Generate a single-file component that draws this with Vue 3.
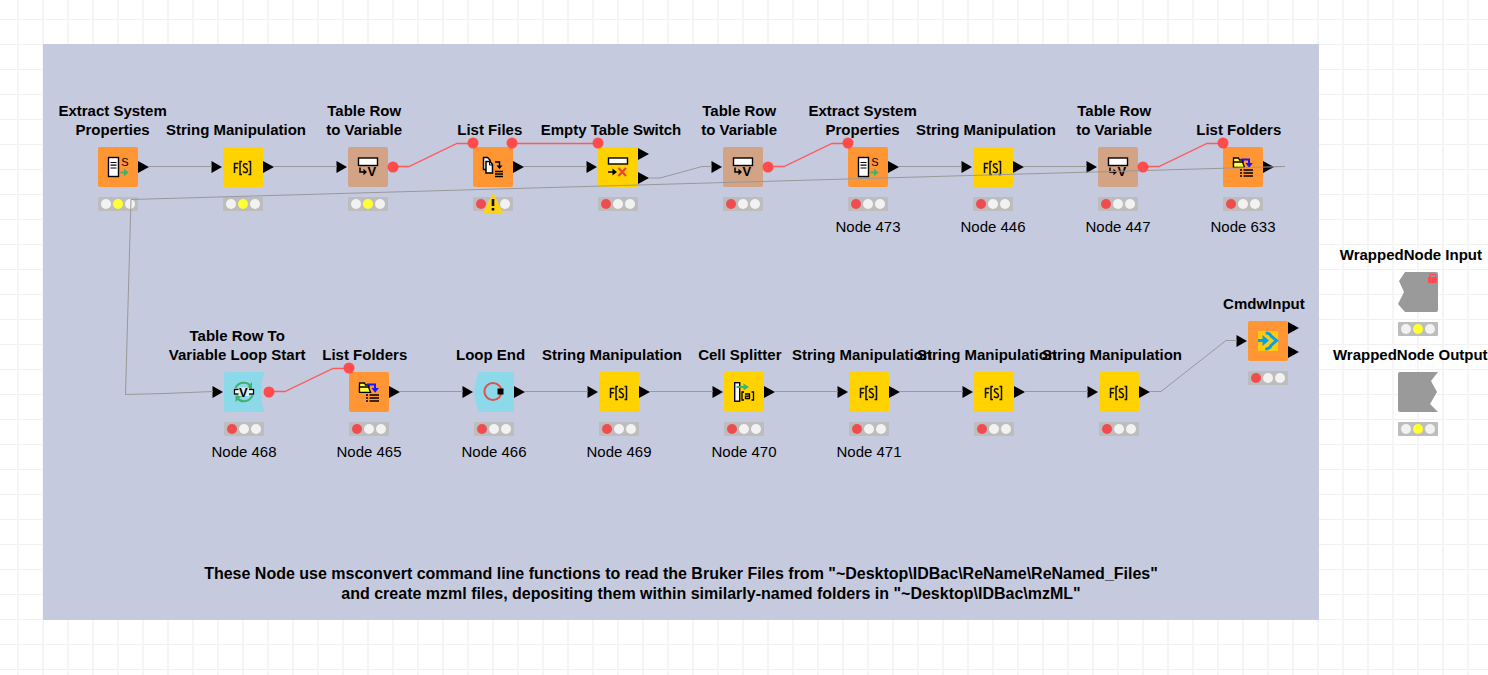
<script setup>
const nodes = [
  { id: 1, x: 98, y: 147, kind: 'extract', title: ['Extract System', 'Properties'], light: 'yellow', out: [20] },
  { id: 2, x: 223, y: 147, kind: 'string', title: ['String Manipulation'], light: 'yellow', in: true, out: [20] },
  { id: 3, x: 348, y: 147, kind: 'row', title: ['Table Row', 'to Variable'], light: 'yellow', in: true, dots: [[45, 20]] },
  { id: 4, x: 473, y: 147, kind: 'files', title: ['List Files'], light: 'red', warn: true, out: [20], dots: [[0, -4], [39, -4]] },
  { id: 5, x: 598, y: 147, kind: 'switch', title: ['Empty Table Switch'], light: 'red', in: true, out: [7, 31], dots: [[0, -4]] },
  { id: 6, x: 723, y: 147, kind: 'row', title: ['Table Row', 'to Variable'], light: 'red', in: true, dots: [[45, 20]] },
  { id: 7, x: 848, y: 147, kind: 'extract', title: ['Extract System', 'Properties'], light: 'red', label: 'Node 473', out: [20], dots: [[0, -4]] },
  { id: 8, x: 973, y: 147, kind: 'string', title: ['String Manipulation'], light: 'red', label: 'Node 446', in: true, out: [20] },
  { id: 9, x: 1098, y: 147, kind: 'row', title: ['Table Row', 'to Variable'], light: 'red', label: 'Node 447', in: true, dots: [[45, 20]] },
  { id: 10, x: 1223, y: 147, kind: 'folders', title: ['List Folders'], light: 'red', label: 'Node 633', out: [20], dots: [[0, -4]] },
  { id: 11, x: 224, y: 372, kind: 'loopstart', title: ['Table Row To', 'Variable Loop Start'], light: 'red', label: 'Node 468', in: true, dots: [[45, 20]] },
  { id: 12, x: 349, y: 372, kind: 'folders', title: ['List Folders'], light: 'red', label: 'Node 465', out: [20], dots: [[0, -4]] },
  { id: 13, x: 474, y: 372, kind: 'loopend', title: ['Loop End'], light: 'red', label: 'Node 466', in: true, out: [20] },
  { id: 14, x: 599, y: 372, kind: 'string', title: ['String Manipulation'], light: 'red', label: 'Node 469', in: true, out: [20] },
  { id: 15, x: 724, y: 372, kind: 'splitter', title: ['Cell Splitter'], light: 'red', label: 'Node 470', in: true, out: [20] },
  { id: 16, x: 849, y: 372, kind: 'string', title: ['String Manipulation'], light: 'red', label: 'Node 471', in: true, out: [20] },
  { id: 17, x: 974, y: 372, kind: 'string', title: ['String Manipulation'], light: 'red', in: true, out: [20] },
  { id: 18, x: 1099, y: 372, kind: 'string', title: ['String Manipulation'], light: 'red', in: true, out: [20] },
  { id: 19, x: 1248, y: 321, kind: 'meta', title: ['CmdwInput'], light: 'red', in: true, out: [7, 31] },
  { id: 20, x: 1398, y: 272, kind: 'input', title: ['WrappedNode Input'], light: 'yellow' },
  { id: 21, x: 1398, y: 372, kind: 'output', title: ['WrappedNode Output'], light: 'yellow' },
]

const fills = {
  extract: '#ff9633', files: '#ff9633', folders: '#ff9633', meta: '#ff9633',
  string: '#ffd200', switch: '#ffd200', splitter: '#ffd200',
  row: '#d2a384', loopstart: '#8cd9e9', loopend: '#8cd9e9',
  input: '#9a9a9a', output: '#9a9a9a',
}
const shapes = {
  loopstart: 'M2 0H40Q34 20 40 40H2Q0 40 0 38V2Q0 0 2 0Z',
  loopend: 'M5 0H38Q40 0 40 2V38Q40 40 38 40H5Q3 38 0 20Q3 2 5 0Z',
  input: 'M7 0H38Q40 0 40 2V38Q40 40 38 40H7L0 32L6 20L1 9Z',
  output: 'M2 0H40L33 9L39 20L32 32L40 40H2Q0 40 0 38V2Q0 0 2 0Z',
}
const square = 'M2 0H38Q40 0 40 2V38Q40 40 38 40H2Q0 40 0 38V2Q0 0 2 0Z'

const dataWires = [
  'M149 166.5H212', 'M274 166.5H337', 'M524 166.5H587', 'M899 166.5H962', 'M1024 166.5H1087',
  'M649 178H660L702 166.5H712',
  'M1274 166.5H1285L131 199.5L125.500 394.500L165 393.500L213 391.500',
  'M400 391.5H463', 'M525 391.5H588', 'M650 391.5H713', 'M775 391.5H838', 'M900 391.5H963', 'M1025 391.5H1088',
  'M1150 391.5H1161L1226 340.5H1237',
]
const variableWires = [
  'M393 166.5H409L457 143.5H473', 'M512 143.5H598',
  'M768 166.5H784L832 143.5H848', 'M1143 166.5H1159L1207 143.5H1223',
  'M269 391.5H285L333 368.5H349',
]
</script>

<template>
  <main class="canvas">
    <section class="annotation">
      <p>These Node use msconvert command line functions to read the Bruker Files from "~Desktop\IDBac\ReName\ReNamed_Files"</p>
      <p class="indented">and create mzml files, depositing them within similarly-named folders in "~Desktop\IDBac\mzML"</p>
    </section>

    <article v-for="n in nodes" :key="n.id" class="node" :style="{ left: n.x + 'px', top: n.y + 'px' }">
      <h2 class="title"><span v-for="line in n.title" :key="line">{{ line }}</span></h2>
      <svg class="body" width="40" height="40" viewBox="0 0 40 40">
        <path :d="shapes[n.kind] || square" :fill="fills[n.kind]" />

        <g v-if="n.kind === 'extract'">
          <rect x="10.500" y="10.500" width="10" height="19" fill="#fff" stroke="#000" stroke-width="1.400" />
          <path d="M12.500 15.500H18.500M12.500 18.200H18.500M12.500 21H18.500" stroke="#000" stroke-width="1.200" />
          <text x="23.300" y="19" font-size="11">S</text>
          <path d="M22.500 25.500H28" stroke="#3cb371" stroke-width="2" />
          <path d="M26 21.500L30.500 25.500L26 29.500Z" fill="#3cb371" />
        </g>
        <g v-else-if="n.kind === 'string'">
          <path d="M11.500 26V16M11 16.500H15.500M11 20.800H14.800" fill="none" stroke="#111" stroke-width="1.500" />
          <path d="M19 14.500H17V27.500H19M25.500 14.500H27.500V27.500H25.500" fill="none" stroke="#111" stroke-width="1.500" />
          <path d="M24.500 17.500Q22.500 16 20.800 17.200Q19.500 19.500 22.500 20.800Q25.500 22.500 24 24.800Q22 26.300 19.800 24.500" fill="none" stroke="#111" stroke-width="1.500" />
        </g>
        <g v-else-if="n.kind === 'row'">
          <rect x="10.500" y="11" width="19" height="7.500" fill="#fff" stroke="#000" stroke-width="1.400" />
          <path d="M12 20.500V25H18" fill="none" stroke="#000" stroke-width="1.500" />
          <path d="M15.500 21.800L19 25L15.500 28.200Z" />
          <text x="19.400" y="29.300" font-size="13" font-weight="700">V</text>
        </g>
        <g v-else-if="n.kind === 'files'">
          <path d="M10.500 10.500H14.500L17 13V22.500H10.500Z" fill="#fff" stroke="#000" stroke-width="1.500" />
          <path d="M13 14.500H17L19.500 17.500V26H13Z" fill="#fff" stroke="#000" stroke-width="1.500" />
          <path d="M16.500 14.500V18H19.500" fill="none" stroke="#000" />
          <path d="M22 15H26.500V20" fill="none" stroke="#000" stroke-width="1.500" />
          <path d="M23.500 18.500H29.500L26.500 22Z" />
          <path d="M22 24.500H30M22 27H30M22 29.500H30" stroke="#000" stroke-width="1.400" />
        </g>
        <g v-else-if="n.kind === 'switch'">
          <rect x="10.500" y="11" width="19" height="6" fill="#fff" stroke="#000" stroke-width="1.400" />
          <path d="M10 25H16" stroke="#000" stroke-width="1.500" />
          <path d="M14.500 21.500L19 25L14.500 28.500Z" />
          <path d="M20.500 21L28 29M28 21L20.500 29" stroke="#ee4444" stroke-width="2.300" />
        </g>
        <g v-else-if="n.kind === 'folders'">
          <path d="M10.500 20V11H15.500L16.500 13H20V15.500" fill="#ffff44" stroke="#000" stroke-width="1.300" />
          <path d="M10.500 20.300V15H19.500L21.500 20.300Z" fill="#ffff44" stroke="#000" stroke-width="1.300" />
          <path d="M18 12.500H26V17" fill="none" stroke="#1717ff" stroke-width="2" />
          <path d="M22.500 16H29.800L26.200 20.800Z" fill="#1717ff" />
          <path d="M17 23H19M17 26H19M17 29H19M20.500 23H30M20.500 26H30M20.500 29H30" stroke="#000" stroke-width="1.600" />
        </g>
        <g v-else-if="n.kind === 'loopstart'">
          <path d="M11.500 16A9 9 0 0 1 27 14.500M28.500 23A9 9 0 0 1 13 26" fill="none" stroke="#43b06f" stroke-width="2" />
          <path d="M28 10V17H21.500ZM11.500 30V23.500H18Z" fill="#43b06f" />
          <rect x="10.500" y="17.500" width="19" height="4.500" fill="#fff" stroke="#000" stroke-width="1.300" />
          <rect x="14.500" y="15.500" width="10.500" height="8.500" fill="#d9eef0" />
          <text x="15" y="24.500" font-size="13" font-weight="700">V</text>
        </g>
        <g v-else-if="n.kind === 'loopend'">
          <circle cx="19" cy="19.500" r="8.600" fill="none" stroke="#e2504e" stroke-width="2" />
          <rect x="23.500" y="16.500" width="6" height="6" />
        </g>
        <g v-else-if="n.kind === 'splitter'">
          <rect x="10.700" y="10.700" width="5" height="18.500" fill="#fff" stroke="#000" stroke-width="1.400" />
          <path d="M12.500 15H21" stroke="#3cb371" stroke-width="2" />
          <path d="M19.500 11.500L25 15L19.500 18.500Z" fill="#3cb371" />
          <path d="M20 20H18V28H20M27.500 20H29.500V28H27.500" fill="none" stroke="#000" stroke-width="1.300" />
          <path d="M21 22H25.500V26.500H21.500V24.200H25.500" fill="none" stroke="#000" stroke-width="1.300" />
        </g>
        <g v-else-if="n.kind === 'meta'">
          <rect x="10" y="10" width="20" height="20" fill="#ffc90e" />
          <path d="M10 19.500H17" stroke="#00a2e8" stroke-width="3" />
          <path d="M14.500 14V25L21 19.500Z" fill="#00a2e8" />
          <path d="M19 12Q22 12.500 23 15L28.500 19.500L23 24.500Q22 27.500 18.500 28" fill="none" stroke="#00a2e8" stroke-width="3" stroke-linecap="round" />
        </g>
        <g v-else-if="n.kind === 'input'">
          <path d="M32 6V2.500H37.500V6" fill="none" stroke="#ff4b50" stroke-width="1.400" />
          <rect x="30" y="5" width="9" height="6" rx="1" fill="#ff4b50" />
        </g>

        <path v-if="n.in" d="M-11.500 14V26L-1 20Z" />
        <path v-for="y in n.out" :key="y" :d="`M40 ${y - 6}V${y + 6}L51 ${y}Z`" />
      </svg>
      <svg class="status" width="40" height="14" viewBox="0 0 40 14">
        <rect width="40" height="14" rx="1" fill="#bdbdbd" />
        <circle cx="8" cy="7" r="5" :fill="n.light === 'red' ? '#f04c50' : '#f2f2f2'" />
        <circle cx="20" cy="7" r="5" :fill="n.light === 'yellow' ? '#ffff33' : '#f2f2f2'" />
        <circle cx="32" cy="7" r="5" fill="#f2f2f2" />
        <g v-if="n.warn">
          <path d="M20 -2L29 16H11Z" fill="#ffd21a" stroke="#ffd21a" stroke-width="2" stroke-linejoin="round" />
          <path d="M20 2V9M20 11V13.500" stroke="#111" stroke-width="2.600" />
        </g>
      </svg>
      <p v-if="n.label" class="label">{{ n.label }}</p>
    </article>

    <svg class="wires" width="100%" height="100%" fill="none" aria-hidden="true">
      <path v-for="d in dataWires" :key="d" :d="d" stroke="#999" />
      <path v-for="d in variableWires" :key="d" :d="d" stroke="#ff5a5a" stroke-width="1.300" />
      <template v-for="n in nodes" :key="n.id">
        <circle v-for="p in n.dots" :key="p[0]" :cx="n.x + p[0]" :cy="n.y + p[1]" r="5.500" fill="#ff4b4b" />
      </template>
    </svg>
  </main>
</template>

<style>
body {
  margin: 0;
}
</style>

<style scoped>
.canvas {
  position: relative;
  min-height: 100vh;
  overflow: hidden;
  color: #000;
  font-family: "Liberation Sans", Arial, sans-serif;
  background-color: #fff;
  background-image:
    linear-gradient(to right, #f5f5f5 2px, transparent 2px),
    linear-gradient(to bottom, #f0f0f0 1px, transparent 1px);
  background-size: 25px 25px;
  background-position: 17px 0, 0 19px;
}
.annotation {
  position: absolute;
  left: 43px;
  top: 44px;
  display: flex;
  flex-direction: column;
  justify-content: flex-end;
  box-sizing: border-box;
  width: 1276px;
  height: 576px;
  padding-bottom: 16px;
  background: #c5cadf;
}
.annotation p {
  margin: 0;
  font-size: 16px;
  font-weight: 700;
  line-height: 20px;
  text-align: center;
}
.annotation .indented {
  padding-left: 60px;
}
.node {
  position: absolute;
  display: flex;
  flex-direction: column;
  align-items: center;
  width: 40px;
}
.title {
  position: absolute;
  left: 50%;
  bottom: 100%;
  margin: 0 0 8px;
  font-size: 15px;
  font-weight: 700;
  line-height: 19px;
  text-align: center;
  white-space: nowrap;
  transform: translateX(-55%);
}
.title span {
  display: block;
}
.body,
.status {
  display: block;
  overflow: visible;
}
.status {
  margin-top: 10px;
}
.label {
  margin: 6px 0 0;
  font-size: 15px;
  line-height: 20px;
  white-space: nowrap;
}
.wires {
  position: absolute;
  inset: 0;
  pointer-events: none;
}
</style>
